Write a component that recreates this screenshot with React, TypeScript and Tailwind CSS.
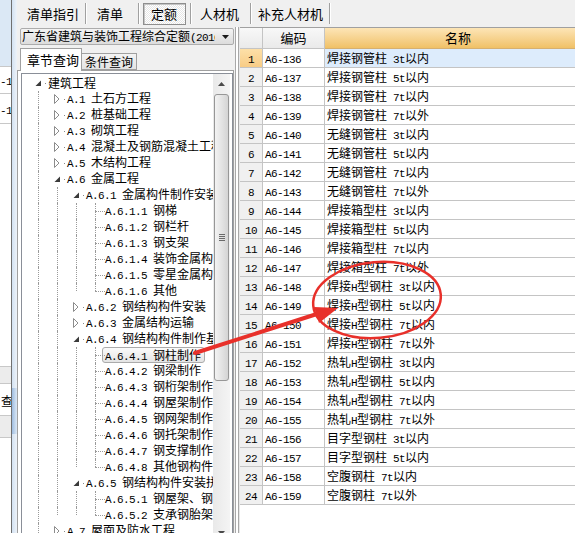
import React from 'react';

const CJK = "font-['Noto_Sans_CJK_SC','Noto_Sans_CJK_JP',sans-serif]";
const MONO = "font-['Liberation_Mono',monospace] text-[11px] tracking-[-0.6px]";

function Txt({ t }: { t: string }) {
  const parts = t.split(/([\x20-\x7e]+)/).filter(Boolean);
  return (
    <>
      {parts.map((p, i) =>
        /^[\x20-\x7e]+$/.test(p) ? (
          <span key={i} className={MONO}>{p}</span>
        ) : (
          <span key={i}>{p}</span>
        )
      )}
    </>
  );
}

type TRow = {
  lv: number;
  t: string;
  ex?: 'open' | 'closed';
  leaf?: 'mid' | 'last';
  g: number[]; // 1 = full guide, 2 = guide ends at middle
  sel?: boolean;
};

const tree: TRow[] = [
  { lv: 0, ex: 'open', t: '建筑工程', g: [] },
  { lv: 1, ex: 'closed', t: 'A.1 土石方工程', g: [1] },
  { lv: 1, ex: 'closed', t: 'A.2 桩基础工程', g: [1] },
  { lv: 1, ex: 'closed', t: 'A.3 砌筑工程', g: [1] },
  { lv: 1, ex: 'closed', t: 'A.4 混凝土及钢筋混凝土工程', g: [1] },
  { lv: 1, ex: 'closed', t: 'A.5 木结构工程', g: [1] },
  { lv: 1, ex: 'open', t: 'A.6 金属工程', g: [1] },
  { lv: 2, ex: 'open', t: 'A.6.1 金属构件制作安装', g: [1, 1] },
  { lv: 3, leaf: 'mid', t: 'A.6.1.1 钢梯', g: [1, 1, 1] },
  { lv: 3, leaf: 'mid', t: 'A.6.1.2 钢栏杆', g: [1, 1, 1] },
  { lv: 3, leaf: 'mid', t: 'A.6.1.3 钢支架', g: [1, 1, 1] },
  { lv: 3, leaf: 'mid', t: 'A.6.1.4 装饰金属构件', g: [1, 1, 1] },
  { lv: 3, leaf: 'mid', t: 'A.6.1.5 零星金属构件', g: [1, 1, 1] },
  { lv: 3, leaf: 'last', t: 'A.6.1.6 其他', g: [1, 1, 2] },
  { lv: 2, ex: 'closed', t: 'A.6.2 钢结构构件安装', g: [1, 1] },
  { lv: 2, ex: 'closed', t: 'A.6.3 金属结构运输', g: [1, 1] },
  { lv: 2, ex: 'open', t: 'A.6.4 钢结构构件制作基本构件', g: [1, 1] },
  { lv: 3, leaf: 'mid', t: 'A.6.4.1 钢柱制作', g: [1, 1, 1], sel: true },
  { lv: 3, leaf: 'mid', t: 'A.6.4.2 钢梁制作', g: [1, 1, 1] },
  { lv: 3, leaf: 'mid', t: 'A.6.4.3 钢桁架制作', g: [1, 1, 1] },
  { lv: 3, leaf: 'mid', t: 'A.6.4.4 钢屋架制作', g: [1, 1, 1] },
  { lv: 3, leaf: 'mid', t: 'A.6.4.5 钢网架制作', g: [1, 1, 1] },
  { lv: 3, leaf: 'mid', t: 'A.6.4.6 钢托架制作', g: [1, 1, 1] },
  { lv: 3, leaf: 'mid', t: 'A.6.4.7 钢支撑制作', g: [1, 1, 1] },
  { lv: 3, leaf: 'last', t: 'A.6.4.8 其他钢构件制作', g: [1, 1, 2] },
  { lv: 2, ex: 'open', t: 'A.6.5 钢结构构件安装拼装', g: [1, 1] },
  { lv: 3, leaf: 'mid', t: 'A.6.5.1 钢屋架、钢托架', g: [1, 1, 1] },
  { lv: 3, leaf: 'last', t: 'A.6.5.2 支承钢胎架', g: [1, 2, 2] },
  { lv: 1, ex: 'closed', t: 'A.7 屋面及防水工程', g: [1] },
];

const items: [string, string][] = [
  ['A6-136', '焊接钢管柱 3t以内'],
  ['A6-137', '焊接钢管柱 5t以内'],
  ['A6-138', '焊接钢管柱 7t以内'],
  ['A6-139', '焊接钢管柱 7t以外'],
  ['A6-140', '无缝钢管柱 3t以内'],
  ['A6-141', '无缝钢管柱 5t以内'],
  ['A6-142', '无缝钢管柱 7t以内'],
  ['A6-143', '无缝钢管柱 7t以外'],
  ['A6-144', '焊接箱型柱 3t以内'],
  ['A6-145', '焊接箱型柱 5t以内'],
  ['A6-146', '焊接箱型柱 7t以内'],
  ['A6-147', '焊接箱型柱 7t以外'],
  ['A6-148', '焊接H型钢柱 3t以内'],
  ['A6-149', '焊接H型钢柱 5t以内'],
  ['A6-150', '焊接H型钢柱 7t以内'],
  ['A6-151', '焊接H型钢柱 7t以外'],
  ['A6-152', '热轧H型钢柱 3t以内'],
  ['A6-153', '热轧H型钢柱 5t以内'],
  ['A6-154', '热轧H型钢柱 7t以内'],
  ['A6-155', '热轧H型钢柱 7t以外'],
  ['A6-156', '目字型钢柱 3t以内'],
  ['A6-157', '目字型钢柱 5t以内'],
  ['A6-158', '空腹钢柱 7t以内'],
  ['A6-159', '空腹钢柱 7t以外'],
];

function Guide({ half }: { half?: boolean }) {
  return (
    <div
      className={`absolute left-[9px] top-0 w-0 border-l border-dotted border-[#9a9a9a] ${half ? 'h-[8px]' : 'h-[16px]'}`}
    />
  );
}

function TreeRow({ r }: { r: TRow }) {
  const cols = [];
  for (let c = 0; c < r.lv; c++) {
    const g = r.g[c] ?? 0;
    cols.push(
      <div key={c} className="relative h-[16px] w-[19px] shrink-0">
        {g === 1 && <Guide />}
        {g === 2 && <Guide half />}
      </div>
    );
  }
  cols.push(
    <div key="own" className="relative h-[16px] w-[19px] shrink-0">
      {r.ex === 'open' && (
        <svg className="absolute left-[6px] top-[5px]" width="7" height="7" viewBox="0 0 7 7">
          <polygon points="6,0.5 6,6 0.5,6" fill="#3a3a3a" />
        </svg>
      )}
      {r.ex === 'closed' && (
        <svg className="absolute left-[6px] top-[3px]" width="6" height="10" viewBox="0 0 6 10">
          <polygon points="0.5,0.5 5,5 0.5,9.5" fill="#fff" stroke="#8c8c8c" strokeWidth="1" />
        </svg>
      )}
      {r.ex && <span className="absolute left-[16px] top-[8px] h-px w-px bg-[#8a8a8a]" />}
      {r.leaf && (
        <>
          <Guide half={r.leaf === 'last'} />
          <div className="absolute left-[9px] top-[8px] h-0 w-[10px] border-t border-dotted border-[#9a9a9a]" />
        </>
      )}
    </div>
  );
  return (
    <div className="flex h-[16px] items-center whitespace-nowrap pl-[7px] leading-[14px]">
      {cols}
      {r.sel ? (
        <span className="-ml-[3px] inline-block h-[16px] rounded-[3px] border border-[#ababab] bg-gradient-to-b from-[#fbfbfb] to-[#e4e4e4] pl-[2px] pr-[3px] leading-[14px]">
          <Txt t={r.t} />
        </span>
      ) : (
        <span>
          <Txt t={r.t} />
        </span>
      )}
    </div>
  );
}

function Sep() {
  return (
    <div className="flex h-[21px] shrink-0">
      <div className="w-px bg-[#a0a0a0]" />
      <div className="w-px bg-white" />
    </div>
  );
}

export default function App() {
  return (
    <div className={`relative flex h-[533px] w-[575px] overflow-hidden bg-[#f0f0f0] text-[12px] text-black ${CJK}`}>
      {/* strip of the window behind */}
      <div className="flex w-[11px] shrink-0 flex-col overflow-hidden">
        <div className="h-[66px] bg-[#dbe8f5]" />
        <div className="h-[27px] border-t border-[#c8c8c8] bg-white text-right leading-[26px]">
          <span className={MONO}>-1</span>
        </div>
        <div className="h-[30px] border-t border-[#c8c8c8] bg-white text-right leading-[29px]">
          <span className={MONO}>-1</span>
        </div>
        <div className="h-[243px] border-t border-[#c8c8c8] bg-white" />
        <div className="h-[17px] border-t border-[#c8c8c8] bg-[#ececec]" />
        <div className="h-[32px] overflow-hidden whitespace-nowrap border-t border-[#c8c8c8] bg-white pl-[1px] leading-[34px]">查</div>
        <div className="h-[22px] border-t border-[#c8c8c8] bg-[#ececec]" />
        <div className="flex-1 border-t border-[#c8c8c8] bg-white" />
      </div>
      <div className="w-px shrink-0 bg-[#707070]" />
      <div className="flex w-[5px] shrink-0 flex-col bg-gradient-to-r from-[#d3e2f2] to-[#eef3f9]">
        <div className="h-[388px]" />
        <div className="h-[46px] bg-gradient-to-r from-[#9fbde0] to-[#dce8f5]" />
      </div>

      <div className="flex min-w-0 flex-1 flex-col">
        {/* tab bar */}
        <div className="flex h-[27px] shrink-0 items-center text-[13px]">
          <div className="w-[68px] shrink-0 pl-[10px]">清单指引</div>
          <Sep />
          <div className="w-[51px] shrink-0 pl-[10px]">清单</div>
          <Sep />
          <div className="ml-[3px] flex h-[22px] w-[43px] shrink-0 items-center border border-[#8e8e8e] bg-[repeating-conic-gradient(#ffffff_0_25%,#e6e6e6_0_50%)] bg-[length:2px_2px] pl-[7px] shadow-[inset_1px_1px_0_#c4c4c4]">
            定额
          </div>
          <div className="ml-[4px]">
            <Sep />
          </div>
          <div className="w-[58px] shrink-0 pl-[8px]">人材机</div>
          <Sep />
          <div className="w-[77px] shrink-0 pl-[6px]">补充人材机</div>
          <Sep />
        </div>

        <div className="flex min-h-0 flex-1">
          {/* left panel */}
          <div className="flex w-[217px] shrink-0 flex-col">
            <div className="ml-[3px] mt-[1px] flex h-[17px] w-[214px] items-center rounded-[2px] border border-[#acacac] bg-gradient-to-b from-[#f4f4f4] to-[#dcdcdc]">
              <div className="min-w-0 flex-1 overflow-hidden whitespace-nowrap pl-[1px] leading-[15px]">
                <Txt t="广东省建筑与装饰工程综合定额(2010)" />
              </div>
              <svg className="ml-[7px] mr-[4px] shrink-0" width="7" height="4" viewBox="0 0 7 4">
                <polygon points="0,0 7,0 3.5,4" fill="#1a1a1a" />
              </svg>
            </div>
            <div className="relative z-10 -mb-px ml-[3px] mt-[3px] flex h-[23px] items-end whitespace-nowrap text-[13px]">
              <div className="h-[23px] w-[62px] border border-b-0 border-[#a0a0a0] bg-white pl-[6px] leading-[21px]">章节查询</div>
              <div className="mb-px h-[17px] w-[55px] overflow-hidden border border-l-0 border-[#a0a0a0] bg-gradient-to-b from-[#f4f4f4] to-[#e3e3e3] pl-[3px] text-[12px] leading-[16px]">
                条件查询
              </div>
            </div>
            <div className="flex-1 border border-b-0 border-[#a0a0a0] bg-white pl-[3px] pt-[2px]">
              <div className="flex h-[469px] w-[212px] border border-[#8a8f98] bg-white">
                <div className="w-[191px] shrink-0 overflow-hidden pt-[1px]">
                  {tree.map((r, i) => (
                    <TreeRow key={i} r={r} />
                  ))}
                </div>
                {/* scrollbar */}
                <div className="flex w-[17px] shrink-0 flex-col bg-gradient-to-r from-[#e9e9e9] to-[#f4f4f4]">
                  <div className="flex h-[20px] items-center justify-center">
                    <svg width="7" height="4" viewBox="0 0 7 4">
                      <polygon points="0,4 7,4 3.5,0" fill="#4a4a4a" />
                    </svg>
                  </div>
                  <div className="mx-[1px] flex h-[287px] flex-col items-center justify-center gap-[1px] rounded-[3px] border border-[#979797] bg-gradient-to-r from-[#f3f3f3] via-[#e4e4e4] to-[#d4d4d4]">
                    <div className="h-px w-[6px] bg-[#6a6a6a]" />
                    <div className="h-px w-[6px] bg-[#6a6a6a]" />
                    <div className="h-px w-[6px] bg-[#6a6a6a]" />
                    <div className="h-px w-[6px] bg-[#6a6a6a]" />
                  </div>
                  <div className="flex-1" />
                  <div className="flex h-[17px] items-center justify-center">
                    <svg width="7" height="4" viewBox="0 0 7 4">
                      <polygon points="0,0 7,0 3.5,4" fill="#4a4a4a" />
                    </svg>
                  </div>
                </div>
              </div>
            </div>
          </div>

          {/* splitter */}
          <div className="flex w-[6px] shrink-0">
            <div className="w-px" />
            <div className="w-px bg-[#a8a8a8]" />
            <div className="w-[2px] bg-white" />
            <div className="w-px bg-[#a8a8a8]" />
            <div className="w-px bg-[#e8e8e8]" />
          </div>

          {/* table */}
          <div className="flex min-w-0 flex-1 flex-col overflow-hidden border-t border-[#a0a0a0] bg-white">
            <div className="flex h-[21px] shrink-0 text-[13px]">
              <div className="w-[23px] shrink-0 border-b border-r border-[#c4c4c4] bg-gradient-to-b from-[#f8f8f8] to-[#eaeaea]" />
              <div className="flex w-[62px] shrink-0 items-center justify-center border-b border-r border-[#c4c4c4] bg-gradient-to-b from-[#f8f8f8] to-[#eaeaea]">
                编码
              </div>
              <div className="flex w-[266px] shrink-0 items-center justify-center border-b border-[#d6b070] bg-gradient-to-b from-[#fde5b6] to-[#f0c166]">
                名称
              </div>
            </div>
            {items.map(([code, name], i) => (
              <div key={code} className="flex h-[19px] shrink-0 leading-[18px]">
                <div
                  className={`w-[23px] shrink-0 border-b border-r border-[#c4c4c4] text-center ${
                    i === 0 ? 'bg-gradient-to-b from-[#fde0a8] to-[#f8cc85]' : 'bg-[#f0f0f0]'
                  }`}
                >
                  <span className={MONO}>{i + 1}</span>
                </div>
                <div className="w-[62px] shrink-0 border-b border-r border-[#c4c4c4] pl-[2px]">
                  <span className={MONO}>{code}</span>
                </div>
                <div
                  className={`w-[266px] shrink-0 whitespace-nowrap border-b border-[#c4c4c4] pl-[2px] ${
                    i === 0 ? 'bg-[#ddecfc]' : ''
                  }`}
                >
                  <Txt t={name} />
                </div>
              </div>
            ))}
          </div>
        </div>
      </div>

      {/* red annotation */}
      <svg className="pointer-events-none absolute left-0 top-0" width="575" height="533" viewBox="0 0 575 533">
        <ellipse
          cx="377"
          cy="300"
          rx="64"
          ry="38"
          transform="rotate(-5 377 300)"
          fill="none"
          stroke="#e8302a"
          strokeWidth="2.5"
        />
        <line x1="195" y1="353" x2="320" y2="313" stroke="#e8302a" strokeWidth="4" strokeLinecap="round" />
        <polygon points="338,308 314,307 319,323" fill="#e8302a" />
      </svg>
    </div>
  );
}
